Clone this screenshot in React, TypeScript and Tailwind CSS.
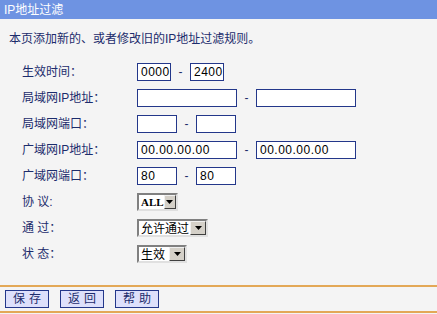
import type { ReactNode } from "react";

const FONT = "font-['SimSun','Liberation_Sans','Noto_Sans_CJK_SC',sans-serif]";

function TextBox({ width, value }: { width: string; value?: string }) {
  return (
    <div
      className={`${width} h-[18px] border border-[#23378a] bg-white px-[3px] text-[12px] leading-[16px] text-black font-['Liberation_Sans','Noto_Sans_CJK_SC',sans-serif] tracking-[0.5px]`}
    >
      {value}
    </div>
  );
}

function Dash() {
  return <span className="w-[19px] text-center text-[12px] text-[#1c2c6c]">-</span>;
}

function Select({ label, width, bold }: { label: string; width: string; bold?: boolean }) {
  return (
    <div
      className={`${width} flex h-[18px] items-stretch border-2 border-t-[#808080] border-l-[#808080] border-b-[#e0e0e0] border-r-[#e0e0e0] bg-white`}
    >
      <span
        className={`flex-1 pl-[2px] leading-[14px] text-black ${
          bold
            ? "text-[11px] font-['Liberation_Serif',serif] font-bold"
            : "text-[12px] font-['Noto_Sans_CJK_SC',sans-serif]"
        }`}
      >
        {label}
      </span>
      <span className="flex w-[16px] items-center justify-center border border-t-[#f0f0f0] border-l-[#f0f0f0] border-b-[#404040] border-r-[#404040] bg-[#d4d0c8]">
        <svg width="7" height="4" viewBox="0 0 7 4">
          <path d="M0 0h7L3.5 4z" fill="#000" />
        </svg>
      </span>
    </div>
  );
}

function Row({ label, children }: { label: string; children: ReactNode }) {
  return (
    <div className="flex h-[26px] items-center">
      <div className="w-[137px] pl-[22px] text-[12px] text-[#1c2c6c]">{label}</div>
      <div className="flex items-center">{children}</div>
    </div>
  );
}

function Btn({ label }: { label: string }) {
  return (
    <div className="flex h-[18px] w-[44px] items-center justify-center border border-[#23378a] bg-[#dde0fb] text-[12px] tracking-[4px] pl-[4px] text-[#1c2c6c]">
      {label}
    </div>
  );
}

export default function App() {
  return (
    <div className={`h-[314px] w-[437px] overflow-hidden bg-[#f4f4f4] ${FONT}`}>
      <div className="flex h-[19px] items-center bg-[#6e93e2] pl-[4px] text-[12px] text-white">
        IP地址过滤
      </div>
      <div className="pl-[9px] pt-[13px] pb-[13px] text-[12px] leading-[14px] text-[#1c2c6c]">
        本页添加新的、或者修改旧的IP地址过滤规则。
      </div>
      <Row label="生效时间：">
        <TextBox width="w-[34px]" value="0000" />
        <Dash />
        <TextBox width="w-[34px]" value="2400" />
      </Row>
      <Row label="局域网IP地址：">
        <TextBox width="w-[100px]" />
        <Dash />
        <TextBox width="w-[100px]" />
      </Row>
      <Row label="局域网端口：">
        <TextBox width="w-[40px]" />
        <Dash />
        <TextBox width="w-[40px]" />
      </Row>
      <Row label="广域网IP地址：">
        <TextBox width="w-[100px]" value="00.00.00.00" />
        <Dash />
        <TextBox width="w-[100px]" value="00.00.00.00" />
      </Row>
      <Row label="广域网端口：">
        <TextBox width="w-[40px]" value="80" />
        <Dash />
        <TextBox width="w-[40px]" value="80" />
      </Row>
      <Row label="协 议:">
        <Select label="ALL" width="w-[41px]" bold />
      </Row>
      <Row label="通 过：">
        <Select label="允许通过" width="w-[71px]" />
      </Row>
      <Row label="状 态：">
        <Select label="生效" width="w-[50px]" />
      </Row>
      <div className="mt-[18px] border-t-2 border-b-2 border-[#e3a857] py-[2px]">
        <div className="flex gap-[11px] pl-[5px] py-[1px]">
          <Btn label="保存" />
          <Btn label="返回" />
          <Btn label="帮助" />
        </div>
      </div>
    </div>
  );
}
